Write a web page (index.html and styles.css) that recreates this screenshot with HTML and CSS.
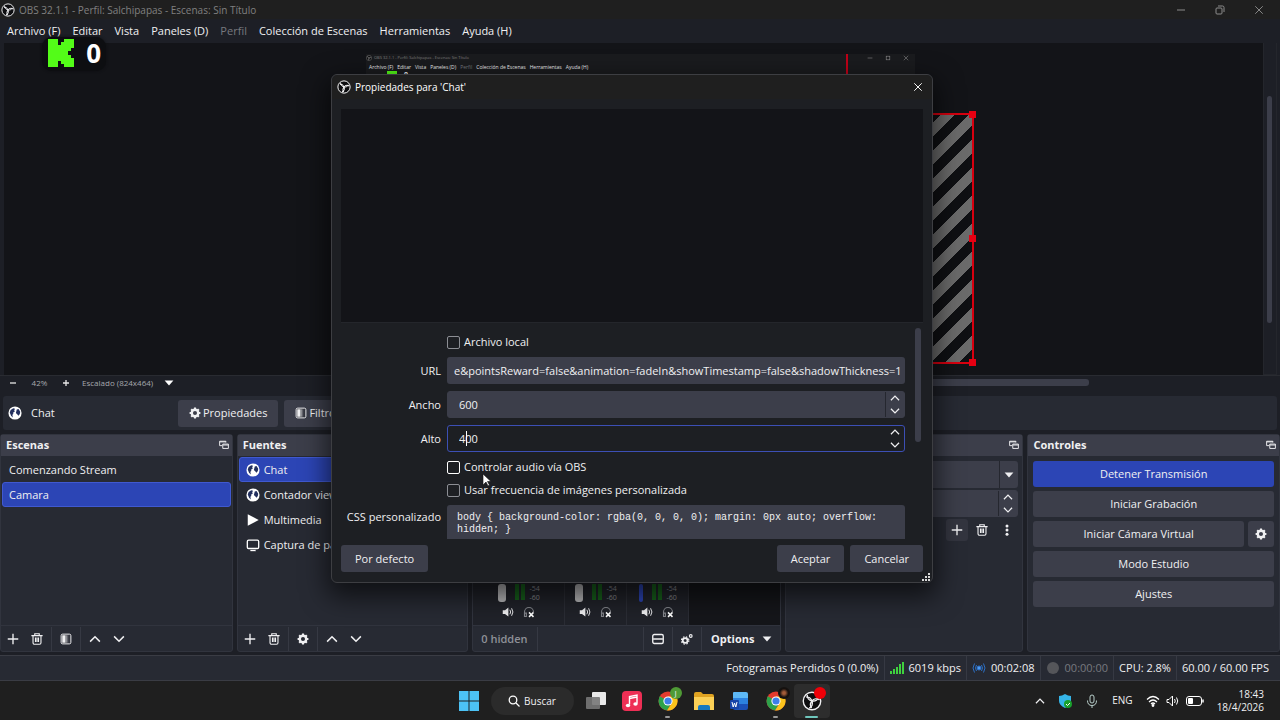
FILE: index.html
```html
<!DOCTYPE html>
<html lang="es">
<head>
  <meta charset="UTF-8" />
  <meta name="viewport" content="width=device-width, initial-scale=1.0"/>
  <title>OBS 32.1.1 - Perfil: Salchipapas - Escenas: Sin Título</title>
  <link rel="stylesheet" href="styles.css">
</head>
<body>

  <!-- shared icons -->
  <svg class="sprite" aria-hidden="true">
    <symbol id="obs" viewBox="0 0 16 16"><circle cx="8" cy="8" r="7" fill="#0d0d0f" stroke="currentColor" stroke-width="1.1"/><g fill="none" stroke="currentColor" stroke-width="1.1"><path id="blade" d="M4.200 3.200C4 5.600 5.600 7.600 8 8c2.300.3 4.300-.700 5-2.500"/><use href="#blade" transform="rotate(120 8 8)"/><use href="#blade" transform="rotate(240 8 8)"/></g></symbol>
    <symbol id="globe" viewBox="0 0 16 16"><circle cx="8" cy="8" r="7.500" fill="#fff"/><path d="M3 4.500 6 2.500l2 .5-1 2 1 1-2 1.500L6 9l-1 1 .5 3L3.500 11 2 7.500zM10 4l2-.5 2 3-.5 2.500-1.500 2-1.500-1.500L9 8l.5-2z" fill="#23305f"/></symbol>
    <symbol id="gear" viewBox="0 0 16 16"><circle cx="8" cy="8" r="4.300" fill="none" stroke="currentColor" stroke-width="3.200"/><path d="M8 .8v2.500M8 12.700v2.500M.8 8h2.500M12.700 8h2.500M2.900 2.900l1.800 1.800M11.300 11.300l1.800 1.800M2.900 13.100l1.800-1.800M11.300 4.700l1.800-1.800" stroke="currentColor" stroke-width="2.800"/></symbol>
    <symbol id="filter" viewBox="0 0 16 16"><rect x="1.500" y="1.500" width="13" height="13" rx="2" fill="#34363f" stroke="currentColor" stroke-width="1.300"/><path d="M3 3h4v10H3z" fill="currentColor"/><path d="M7 3h2v10H7z" fill="currentColor" opacity=".6"/><path d="M9 3h2v10H9z" fill="currentColor" opacity=".25"/></symbol>
    <symbol id="plus" viewBox="0 0 16 16"><path d="M8 1v14M1 8h14" stroke="currentColor" stroke-width="1.800"/></symbol>
    <symbol id="trash" viewBox="0 0 16 16"><path d="M.5 3.500h15M5 3V1h6V3M2.700 4v9a2 2 0 0 0 2 2h6.600a2 2 0 0 0 2-2V4M6 6v6M8 6v6M10 6v6" fill="none" stroke="currentColor" stroke-width="1.500"/></symbol>
    <symbol id="up" viewBox="0 0 16 16"><path d="M1.500 11.500 8 5l6.500 6.500" fill="none" stroke="currentColor" stroke-width="2"/></symbol>
    <symbol id="down" viewBox="0 0 16 16"><path d="M1.500 4.500 8 11l6.500-6.500" fill="none" stroke="currentColor" stroke-width="2"/></symbol>
    <symbol id="caret" viewBox="0 0 16 16"><path d="M1 4h14l-7 8z" fill="currentColor"/></symbol>
    <symbol id="float" viewBox="0 0 16 16"><path d="M11 4V2H1v7h4M1 3h10" fill="none" stroke="currentColor" stroke-width="1.500"/><path d="M6 6.500h9v7H6zM6 8h9" fill="none" stroke="currentColor" stroke-width="1.500"/></symbol>
    <symbol id="play" viewBox="0 0 16 16"><path d="M2 1.500v13L14.500 8z" fill="#fff"/></symbol>
    <symbol id="screen" viewBox="0 0 16 16"><rect x="1.500" y="2.500" width="13" height="9.500" rx="1.500" fill="none" stroke="#fff" stroke-width="1.500"/><path d="M5 14.300h6" stroke="#fff" stroke-width="1.500"/></symbol>
    <symbol id="dots" viewBox="0 0 16 16"><g fill="currentColor"><circle cx="8" cy="2.500" r="2"/><circle cx="8" cy="8" r="2"/><circle cx="8" cy="13.500" r="2"/></g></symbol>
    <symbol id="close" viewBox="0 0 16 16"><path d="M2 2l12 12M14 2 2 14" stroke="currentColor" stroke-width="1.500"/></symbol>
    <symbol id="sound" viewBox="0 0 16 16"><path d="M1 5.500h3L8.500 2v12L4 10.500H1z" fill="currentColor"/><path d="M10.500 5q2 3 0 6M12.800 3q3.500 5 0 10" fill="none" stroke="currentColor" stroke-width="1.300"/></symbol>
    <symbol id="phones" viewBox="0 0 16 16"><path d="M3 14H2V8a6 6 0 0 1 12 0M2.500 9.500h2V14h-2" fill="none" stroke="#85878d" stroke-width="1.500"/><path d="M8 8.500l6 6M14 8.500l-6 6" stroke="#fff" stroke-width="2"/></symbol>
    <symbol id="chrome" viewBox="0 0 20 20"><circle cx="10" cy="10" r="9.500" fill="#e33b2e"/><path d="M10 10 1.800 5.200A9.500 9.500 0 0 0 9 19.400l4.500-7.400z" fill="#2da24a"/><path d="M10 10l3.800 2.200L9 19.400A9.500 9.500 0 0 0 18.400 5.500H10z" fill="#fbc31c"/><circle cx="10" cy="10" r="4.600" fill="#fff"/><circle cx="10" cy="10" r="3.600" fill="#3d7fe8"/></symbol>
  </svg>

  <header class="titlebar">
    <svg class="icon-lg"><use href="#obs"/></svg>
    <span class="window-title">OBS 32.1.1 - Perfil: Salchipapas - Escenas: Sin Título</span>
    <button class="win-btn" aria-label="Minimizar"><svg class="icon-xs" viewBox="0 0 10 10"><path d="M1 5h8" stroke="currentColor"/></svg></button>
    <button class="win-btn" aria-label="Restaurar"><svg class="icon-xs" viewBox="0 0 10 10" fill="none" stroke="currentColor"><rect x="1" y="3" width="6" height="6" rx="1"/><path d="M3 1h4.500Q9 1 9 2.500V7"/></svg></button>
    <button class="win-btn" aria-label="Cerrar"><svg class="icon-xs"><use href="#close"/></svg></button>
  </header>

  <nav class="menubar">
    <a href="#">Archivo (F)</a>
    <a href="#">Editar</a>
    <a href="#">Vista</a>
    <a href="#">Paneles (D)</a>
    <a href="#" class="disabled">Perfil</a>
    <a href="#">Colección de Escenas</a>
    <a href="#">Herramientas</a>
    <a href="#">Ayuda (H)</a>
  </nav>

  <!-- kick viewer counter, floats over the window -->
  <div class="viewers">
    <svg class="kick" viewBox="0 0 26 28" fill="#53fc18"><path d="M0 0h10v6h3V3h3V0h10v9h-3v3h-3v4h3v3h3v9H16v-3h-3v-3h-3v6H0z"/></svg>
    <span>0</span>
  </div>

  <main class="preview">
    <div class="canvas">
      <div class="nested">
        <div class="nested-title">
          <svg class="nested-icon"><use href="#obs"/></svg>
          <span class="window-title">OBS 32.1.1 - Perfil: Salchipapas - Escenas: Sin Título</span>
          <svg class="nested-icon" viewBox="0 0 10 10"><path d="M1 5h8" stroke="currentColor"/></svg>
          <svg class="nested-icon" viewBox="0 0 10 10"><rect x="2" y="2" width="6" height="6" fill="none" stroke="currentColor"/></svg>
          <svg class="nested-icon"><use href="#close"/></svg>
        </div>
        <div class="nested-menu">
          <span>Archivo (F)</span><span>Editar</span><span>Vista</span><span>Paneles (D)</span><span class="disabled">Perfil</span><span>Colección de Escenas</span><span>Herramientas</span><span>Ayuda (H)</span>
        </div>
        <div class="nested-viewers"><i></i><b>0</b></div>
        <div class="nested-line"></div>
      </div>
      <div class="selection">
        <i class="handle top"></i>
        <i class="handle middle"></i>
        <i class="handle bottom"></i>
      </div>
    </div>
    <div class="vscroll"><div class="vthumb"></div></div>
  </main>

  <div class="zoombar">
    <button aria-label="Reducir"><svg class="icon-xs" viewBox="0 0 10 10"><path d="M2 5h6" stroke="currentColor" stroke-width="1.300"/></svg></button>
    <span class="zoom">42%</span>
    <button aria-label="Ampliar"><svg class="icon-xs" viewBox="0 0 10 10"><path d="M2 5h6M5 2v6" stroke="currentColor" stroke-width="1.300"/></svg></button>
    <button class="scale">Escalado (824x464) <svg class="icon-xs"><use href="#caret"/></svg></button>
    <div class="hscroll"><div class="hthumb"></div></div>
  </div>

  <section class="contextbar">
    <svg class="icon-lg"><use href="#globe"/></svg>
    <span class="context-name">Chat</span>
    <button class="btn"><svg class="icon"><use href="#gear"/></svg>Propiedades</button>
    <button class="btn"><svg class="icon"><use href="#filter"/></svg>Filtros</button>
  </section>

  <section class="docks">
    <div class="dock">
      <h2>Escenas <svg class="icon-xs"><use href="#float"/></svg></h2>
      <ul class="list">
        <li>Comenzando Stream</li>
        <li class="selected">Camara</li>
      </ul>
      <div class="toolbar">
        <button aria-label="Añadir escena"><svg class="icon"><use href="#plus"/></svg></button>
        <button aria-label="Eliminar escena"><svg class="icon"><use href="#trash"/></svg></button>
        <span class="sep"></span>
        <button aria-label="Filtros de escena"><svg class="icon"><use href="#filter"/></svg></button>
        <span class="sep"></span>
        <button aria-label="Subir escena"><svg class="icon"><use href="#up"/></svg></button>
        <button aria-label="Bajar escena"><svg class="icon"><use href="#down"/></svg></button>
      </div>
    </div>

    <div class="dock">
      <h2>Fuentes</h2>
      <ul class="list sources">
        <li class="selected"><svg class="icon-lg"><use href="#globe"/></svg>Chat</li>
        <li><svg class="icon-lg"><use href="#globe"/></svg>Contador viewers</li>
        <li><svg class="icon-lg"><use href="#play"/></svg>Multimedia</li>
        <li><svg class="icon-lg"><use href="#screen"/></svg>Captura de pantalla</li>
      </ul>
      <div class="toolbar">
        <button aria-label="Añadir fuente"><svg class="icon"><use href="#plus"/></svg></button>
        <button aria-label="Eliminar fuente"><svg class="icon"><use href="#trash"/></svg></button>
        <span class="sep"></span>
        <button aria-label="Propiedades de fuente"><svg class="icon"><use href="#gear"/></svg></button>
        <span class="sep"></span>
        <button aria-label="Subir fuente"><svg class="icon"><use href="#up"/></svg></button>
        <button aria-label="Bajar fuente"><svg class="icon"><use href="#down"/></svg></button>
      </div>
    </div>

    <div class="dock">
      <h2></h2>
      <div class="mixer">
        <div class="strip wide">
          <div class="levels"><i class="fader"></i><i class="meter"></i><span>-54<br>-60</span></div>
          <div class="strip-buttons">
            <button aria-label="Silenciar"><svg class="icon"><use href="#sound"/></svg></button>
            <button aria-label="Monitorizar"><svg class="icon"><use href="#phones"/></svg></button>
          </div>
        </div>
        <div class="strip">
          <div class="levels"><i class="fader"></i><i class="meter"></i><span>-54<br>-60</span></div>
          <div class="strip-buttons">
            <button aria-label="Silenciar"><svg class="icon"><use href="#sound"/></svg></button>
            <button aria-label="Monitorizar"><svg class="icon"><use href="#phones"/></svg></button>
          </div>
        </div>
        <div class="strip">
          <div class="levels"><i class="fader blue"></i><i class="meter"></i><span>-54<br>-60</span></div>
          <div class="strip-buttons">
            <button aria-label="Silenciar"><svg class="icon"><use href="#sound"/></svg></button>
            <button aria-label="Monitorizar"><svg class="icon"><use href="#phones"/></svg></button>
          </div>
        </div>
      </div>
      <div class="toolbar">
        <span class="hidden-count">0 hidden</span>
        <span class="sep"></span>
        <span class="spacer"></span>
        <span class="sep"></span>
        <button aria-label="Disposición"><svg class="icon" viewBox="0 0 16 16"><rect x="1" y="2" width="14" height="12" rx="2" fill="none" stroke="currentColor" stroke-width="1.800"/><path d="M1.500 8h13" stroke="currentColor" stroke-width="2"/></svg></button>
        <span class="sep"></span>
        <button aria-label="Propiedades avanzadas de audio"><svg class="icon" viewBox="0 0 16 16" fill="none" stroke="currentColor"><circle cx="5.500" cy="10" r="3.200" stroke-width="2.400"/><circle cx="5.500" cy="10" r="5" stroke-width="1.500" stroke-dasharray="2 2"/><circle cx="13" cy="4" r="1.800" stroke-width="1.500"/></svg></button>
        <span class="sep"></span>
        <button class="options">Options <svg class="icon-xs"><use href="#caret"/></svg></button>
      </div>
    </div>

    <div class="dock">
      <h2><svg class="icon-xs"><use href="#float"/></svg></h2>
      <div class="transitions">
        <div class="select-box">
          <select aria-label="Transición"></select>
          <svg class="icon-xs"><use href="#caret"/></svg>
        </div>
        <div class="spin">
          <input type="text" aria-label="Duración">
          <div class="arrows">
            <button aria-label="Aumentar duración"><svg class="icon-xs"><use href="#up"/></svg></button>
            <button aria-label="Reducir duración"><svg class="icon-xs"><use href="#down"/></svg></button>
          </div>
        </div>
        <div class="transition-buttons">
          <button class="filled" aria-label="Añadir transición"><svg class="icon"><use href="#plus"/></svg></button>
          <button aria-label="Eliminar transición"><svg class="icon"><use href="#trash"/></svg></button>
          <button aria-label="Más"><svg class="icon"><use href="#dots"/></svg></button>
        </div>
      </div>
    </div>

    <div class="dock">
      <h2>Controles <svg class="icon-xs"><use href="#float"/></svg></h2>
      <div class="controls">
        <button class="btn primary">Detener Transmisión</button>
        <button class="btn">Iniciar Grabación</button>
        <div class="row">
          <button class="btn">Iniciar Cámara Virtual</button>
          <button class="btn square" aria-label="Configurar cámara virtual"><svg class="icon"><use href="#gear"/></svg></button>
        </div>
        <button class="btn">Modo Estudio</button>
        <button class="btn">Ajustes</button>
      </div>
    </div>
  </section>

  <footer class="statusbar">
    <span>Fotogramas Perdidos 0 (0.0%)</span>
    <span><svg class="icon-lg" viewBox="0 0 14 14" fill="#3fd13f"><path d="M0 10h2v3H0zM3 8h2v5H3zM6 6h2v7H6zM9 3h2v10H9zM12 1h2v12h-2z"/></svg>6019 kbps</span>
    <span><svg class="icon-lg" viewBox="0 0 14 14" fill="none" stroke="#2c6fc4"><circle cx="7" cy="7" r="2" fill="#4b9bf5"/><path d="M4.500 4q-2 3 0 6M9.500 4q2 3 0 6M2.500 2.500q-3 4.500 0 9M11.500 2.500q3 4.500 0 9"/></svg>00:02:08</span>
    <span class="muted"><svg class="icon-lg" viewBox="0 0 14 14"><circle cx="7" cy="7" r="6" fill="#55565a"/></svg>00:00:00</span>
    <span>CPU: 2.8%</span>
    <span>60.00 / 60.00 FPS</span>
  </footer>

  <div class="taskbar">
    <div class="apps">
      <button class="app" aria-label="Inicio"><svg viewBox="0 0 20 20" fill="#4cc2f5"><path d="M0 0h9.500v9.500H0zM10.500 0H20v9.500h-9.500zM0 10.500h9.500V20H0zM10.500 10.500H20V20h-9.500z"/></svg></button>
      <button class="search"><svg class="icon" viewBox="0 0 12 12" fill="none" stroke="#fff" stroke-width="1.300"><circle cx="5" cy="5" r="3.800"/><path d="M8 8l3.500 3.500"/></svg>Buscar</button>
      <button class="app" aria-label="Vista de tareas"><svg viewBox="0 0 20 20"><rect x="6" y="1" width="14" height="13" rx="1" fill="#e9e9e9"/><rect x="0" y="6" width="14" height="12" rx="1" fill="#777" opacity=".9"/></svg></button>
      <button class="app" aria-label="Música"><svg viewBox="0 0 20 20"><rect width="20" height="20" rx="4" fill="#ee2f55"/><path d="M7.500 13.500V5.500L15 4v8.500M7.500 7.500 15 6" fill="none" stroke="#fff" stroke-width="1.400"/><ellipse cx="6" cy="14.500" rx="2.200" ry="1.800" fill="#fff"/><ellipse cx="13.500" cy="13" rx="2.200" ry="1.800" fill="#fff"/></svg></button>
      <button class="app running" aria-label="Chrome"><svg><use href="#chrome"/></svg><span class="badge green">J</span></button>
      <button class="app" aria-label="Explorador"><svg viewBox="0 0 20 20"><path d="M0 3q0-2 2-2h5l2 2h9q2 0 2 2v4H0z" fill="#e0a321"/><path d="M0 6h20v13H0z" fill="#fbd056"/><path d="M4 19v-3q0-2 2-2h8q2 0 2 2v3z" fill="#1779c0"/></svg></button>
      <button class="app" aria-label="Word"><svg viewBox="0 0 20 20"><path d="M3 2q0-1 1-1h12q2 0 2 2v4H3z" fill="#5db8f5"/><path d="M3 7h15v6H3z" fill="#2c82e0"/><path d="M3 13h15v4q0 2-2 2H5q-2 0-2-2z" fill="#1b50b8"/><rect y="9" width="9" height="9" rx="1" fill="#1844a8"/><path d="M2 11l1.200 5 1.300-4 1.300 4L7 11" fill="none" stroke="#fff"/></svg></button>
      <button class="app running" aria-label="Chrome, segundo perfil"><svg><use href="#chrome"/></svg><span class="badge dark"></span></button>
      <button class="app active" aria-label="OBS Studio"><svg><use href="#obs"/></svg><span class="badge red"></span></button>
    </div>
    <div class="tray">
      <svg class="icon-xs"><use href="#up"/></svg>
      <svg class="icon-lg" viewBox="0 0 14 14"><path d="M7 0q3 2 6 2v5q0 4-6 7-6-3-6-7V2q3 0 6-2z" fill="#35b5e8"/><circle cx="10" cy="10" r="4" fill="#19a02c"/><path d="M8 10l1.500 1.500L12 9" fill="none" stroke="#fff"/></svg>
      <svg class="icon-lg" viewBox="0 0 14 14" fill="none" stroke="#b9cfcb"><rect x="5" y="1" width="4" height="8" rx="2"/><path d="M2.500 6.500q0 5 4.500 5t4.500-5M7 11.500V14"/></svg>
      <span class="lang">ENG</span>
      <div class="system">
        <svg class="icon-lg" viewBox="0 0 14 14" fill="none" stroke="#fff" stroke-width="1.200"><path d="M1 5.500q6-6 12 0M3 8q4-4 8 0M5 10q2-2 4 0"/><circle cx="7" cy="11.500" r=".8" fill="#fff"/></svg>
        <svg class="icon-lg" viewBox="0 0 14 14" fill="none" stroke="#fff"><path d="M1 5.500h2L6.500 2v10L3 8.500H1zM8.500 5q1.500 2 0 4M10.500 3.500q2.500 3.500 0 7"/></svg>
        <svg class="battery" viewBox="0 0 18 10"><rect x=".5" y=".5" width="15" height="9" rx="2.500" fill="none" stroke="#fff"/><rect x="2" y="2" width="5" height="6" rx="1" fill="#fff"/><path d="M17 3.500v3" stroke="#fff" stroke-width="1.500"/></svg>
      </div>
      <div class="clock">18:43<br>18/4/2026</div>
    </div>
  </div>

  <div class="dialog" role="dialog" aria-labelledby="dialogTitle">
    <div class="dialog-title">
      <svg class="icon-lg"><use href="#obs"/></svg>
      <span id="dialogTitle">Propiedades para 'Chat'</span>
      <button aria-label="Cerrar"><svg class="icon-xs"><use href="#close"/></svg></button>
    </div>
    <div class="dialog-preview"></div>
    <div class="form-area">
      <form class="form">
        <div class="check">
          <input type="checkbox" id="local"><label for="local">Archivo local</label>
        </div>

        <label for="url">URL</label>
        <input type="text" id="url" class="field" value="e&amp;pointsReward=false&amp;animation=fadeIn&amp;showTimestamp=false&amp;shadowThickness=1">

        <label for="width">Ancho</label>
        <div class="spin">
          <input type="text" id="width" value="600">
          <div class="arrows">
            <button type="button" aria-label="Aumentar ancho"><svg class="icon-xs"><use href="#up"/></svg></button>
            <button type="button" aria-label="Reducir ancho"><svg class="icon-xs"><use href="#down"/></svg></button>
          </div>
        </div>

        <label for="height">Alto</label>
        <div class="spin focused">
          <input type="text" id="height" value="400">
          <i class="text-cursor"></i>
          <div class="arrows">
            <button type="button" aria-label="Aumentar alto"><svg class="icon-xs"><use href="#up"/></svg></button>
            <button type="button" aria-label="Reducir alto"><svg class="icon-xs"><use href="#down"/></svg></button>
          </div>
        </div>

        <div class="check hover">
          <input type="checkbox" id="audio"><label for="audio">Controlar audio vía OBS</label>
        </div>
        <div class="check">
          <input type="checkbox" id="fps"><label for="fps">Usar frecuencia de imágenes personalizada</label>
        </div>

        <label for="css" class="top">CSS personalizado</label>
        <textarea id="css" class="field" rows="4">body { background-color: rgba(0, 0, 0, 0); margin: 0px auto; overflow: hidden; }</textarea>
      </form>
      <div class="form-scroll"><div class="form-thumb"></div></div>
    </div>
    <div class="dialog-buttons">
      <button class="btn">Por defecto</button>
      <span class="spacer"></span>
      <button class="btn">Aceptar</button>
      <button class="btn">Cancelar</button>
    </div>
    <svg class="grip" viewBox="0 0 8 8" fill="#d8d8d8"><path d="M0 6h2v2H0zM3 3h2v2H3zM3 6h2v2H3zM6 0h2v2H6zM6 3h2v2H6zM6 6h2v2H6z"/></svg>
  </div>

  <svg class="pointer" viewBox="0 0 10 14"><path d="M1 1v11l3-3 2 4 1.500-1-2-3.500H9z" fill="#fff" stroke="#111" stroke-width=".6"/></svg>

</body>
</html>
```

FILE: styles.css
```css
* {
  box-sizing: border-box;
}

body {
  margin: 0;
  min-height: 100vh;
  display: flex;
  flex-direction: column;
  position: relative;
  overflow: hidden;
  background-color: #1d1f26;
  color: #f0f0f2;
  font-family: "Open Sans", "Noto Sans", sans-serif;
  font-size: 11px;
  line-height: 16px;
}

button, input, select, textarea {
  font: inherit;
  color: inherit;
  margin: 0;
  padding: 0;
  border: none;
  background: none;
  outline: none;
}

button {
  display: inline-flex;
  align-items: center;
  justify-content: center;
  white-space: nowrap;
}

a {
  color: inherit;
  text-decoration: none;
}

svg {
  display: block;
  flex: none;
}

.sprite {
  position: absolute;
  width: 0;
  height: 0;
}

.icon-xs { width: 10px; height: 10px; }
.icon { width: 12px; height: 12px; }
.icon-lg { width: 14px; height: 14px; }

.spacer {
  flex: 1;
}

/* title and menu */
.titlebar {
  display: flex;
  align-items: center;
  height: 19px;
  padding: 0 4px 0 1px;
  gap: 4px;
  background-color: #1f1f1f;
  font-size: 10px;
}

.window-title {
  flex: 1;
  color: #808080;
}

.win-btn {
  width: 35px;
  color: #8c8c8c;
}

.menubar {
  display: flex;
  align-items: center;
  gap: 12px;
  height: 24px;
  padding: 0 7px;
}

.disabled, .muted {
  color: #77797f;
}

.viewers {
  position: absolute;
  z-index: 1;
  top: 37px;
  left: 42px;
  width: 64px;
  height: 34px;
  display: flex;
  align-items: center;
  justify-content: space-between;
  padding: 0 5px 2px 6px;
  border-radius: 10px;
  background-color: #0d0e11;
  box-shadow: 0 0 3px #0d0e11;
  color: #fff;
  font-size: 26px;
  font-weight: bold;
}

.kick {
  width: 26px;
  height: 28px;
}

/* preview */
.preview {
  flex: 1;
  display: flex;
  padding: 0 3px 0 4px;
}

.canvas {
  flex: 1;
  position: relative;
  overflow: hidden;
  background-color: #131418;
}

.nested {
  position: absolute;
  top: 11px;
  left: 362px;
  width: 549px;
  height: 300px;
  background-color: #1a1b1e;
  font-size: 5px;
  line-height: 8px;
}

.nested-title {
  display: flex;
  align-items: center;
  gap: 2px;
  padding-right: 6px;
  font-size: 4px;
  color: #8c8c8c;
}

.nested-title svg + svg {
  margin-left: 10px;
}

.nested-icon {
  width: 6px;
  height: 6px;
}

.nested-menu {
  display: flex;
  gap: 4px;
  padding: 1px 3px 0;
}

.nested-viewers {
  display: flex;
  gap: 7px;
  padding-left: 21px;
  font-size: 7px;
  line-height: 8px;
}

.nested-viewers i {
  width: 10px;
  height: 10px;
  background-color: #53fc18;
}

.nested-line {
  position: absolute;
  top: 0;
  left: 480px;
  width: 2px;
  height: 30px;
  background-color: #c00018;
}

.selection {
  position: absolute;
  top: 70px;
  left: 843px;
  width: 127px;
  height: 251px;
  border: 2px solid #d8000f;
  background: linear-gradient(135deg, #0f1013 25%, #6b6b6b 25% 50%, #0f1013 50% 75%, #6b6b6b 75%) -7px 0 / 28px 28px;
}

.handle {
  position: absolute;
  right: -4px;
  width: 7px;
  height: 7px;
  background-color: #e60012;
}

.handle.top { top: -4px; }
.handle.middle { top: calc(50% - 4px); }
.handle.bottom { bottom: -4px; }

.vscroll {
  width: 14px;
  padding: 53px 4px 0 3px;
  border: 1px solid #24262c;
  border-top: none;
}

.vthumb {
  height: 227px;
  border-radius: 3px;
  background-color: #3c3e4a;
}

.zoombar {
  display: flex;
  align-items: center;
  height: 16px;
  padding: 0 18px 2px 8px;
  border-top: 1px solid #292b31;
  font-size: 8px;
  line-height: 12px;
  color: #a6a8ad;
}

.zoombar button {
  color: #e6e6e6;
}

.zoombar .zoom {
  width: 43px;
  text-align: center;
}

.zoombar .scale {
  margin-left: 11px;
  gap: 11px;
  color: #a6a8ad;
}

.zoombar .scale svg {
  color: #fff;
}

.hscroll {
  flex: 1;
  margin-left: 4px;
}

.hthumb {
  width: 55%;
  height: 7px;
  margin-left: 29%;
  border-radius: 3px;
  background-color: #3c3e4a;
}

.contextbar {
  display: flex;
  align-items: center;
  gap: 6px;
  height: 34px;
  margin: 5px 3px 4px;
  padding: 0 5px;
  border-radius: 3px;
  background-color: #272a33;
}

.context-name {
  width: 144px;
  padding-left: 3px;
}

.btn {
  height: 27px;
  padding: 0 14px;
  gap: 2px;
  border-radius: 3px;
  background-color: #3c3e4a;
}

.contextbar .btn {
  padding: 0 11px;
}

/* docks */
.docks {
  display: grid;
  grid-template-columns: 233fr 232fr 309fr 239fr 253fr;
  gap: 4px;
  min-height: 218px;
}

.dock {
  display: flex;
  flex-direction: column;
  min-width: 0;
  border: 1px solid #31343e;
  border-radius: 3px;
  background-color: #272a33;
}

.dock h2 {
  display: flex;
  align-items: center;
  justify-content: space-between;
  height: 21px;
  margin: 0;
  padding: 0 3px 2px 5px;
  background-color: #3c3e4a;
  font-size: 11px;
}

.dock h2 svg:only-child {
  margin-left: auto;
}

.list {
  flex: 1;
  margin: 0;
  padding: 1px;
  list-style: none;
}

.list li {
  display: flex;
  align-items: center;
  gap: 4px;
  height: 25px;
  padding: 0 6px;
  border: 1px solid transparent;
  border-radius: 3px;
  white-space: nowrap;
}

.list .selected {
  border-color: #4059d0;
  background-color: #2c45b5;
}

.toolbar {
  display: flex;
  align-items: center;
  height: 26px;
  padding: 0;
  border-top: 1px solid #31343e;
}

.toolbar button {
  width: 24px;
}

.sep {
  width: 1px;
  height: 24px;
  margin: 0 2px;
  background-color: #363943;
}

.toolbar .options {
  width: 76px;
  gap: 8px;
  font-weight: bold;
}

.hidden-count {
  width: 62px;
  padding-left: 8px;
  font-weight: 600;
  color: #8f9198;
}

.mixer {
  flex: 1;
  display: flex;
  background-color: #15161a;
}

.strip {
  width: 62px;
  display: flex;
  flex-direction: column;
  justify-content: flex-end;
  gap: 4px;
  padding-bottom: 7px;
  border-right: 1px solid #2b2d35;
  background-color: #202229;
}

.strip.wide {
  width: 92px;
}

.levels, .strip-buttons {
  display: flex;
  justify-content: center;
  gap: 9px;
}

.levels {
  font-size: 7px;
  line-height: 9px;
  color: #8c8e94;
}

.fader {
  width: 8px;
  height: 18px;
  border-radius: 3px;
  background-color: #b9b9bb;
}

.fader.blue {
  width: 4px;
  background-color: #2c45b5;
}

.meter {
  width: 10px;
  height: 16px;
  border: solid #17611c;
  border-width: 0 4px;
}

.levels span {
  margin-left: -4px;
}

.transitions {
  display: flex;
  flex-direction: column;
  gap: 2px;
  padding: 5px 4px;
}

.select-box {
  display: flex;
  align-items: center;
  height: 27px;
  padding-right: 4px;
  border-radius: 3px;
  background-color: #3c3e4a;
}

.select-box select {
  flex: 1;
  height: 100%;
  margin-right: 4px;
  appearance: none;
  border-right: 1px solid #25272f;
}

.transition-buttons {
  display: flex;
  justify-content: flex-end;
  gap: 3px;
}

.transition-buttons button {
  width: 22px;
  height: 22px;
  border-radius: 3px;
}

.transition-buttons .filled {
  background-color: #33353f;
}

.controls {
  display: flex;
  flex-direction: column;
  gap: 4px;
  padding: 5px;
}

.controls .btn {
  height: 26px;
}

.controls .row {
  display: flex;
  gap: 4px;
}

.row .btn {
  flex: 1;
}

.row .square {
  flex: none;
  width: 26px;
  padding: 0;
}

.btn.primary {
  background-color: #2c45b5;
}

/* status bar */
.statusbar {
  display: flex;
  justify-content: flex-end;
  height: 26px;
  margin-top: 3px;
  padding-right: 6px;
  border: solid #3a3c44;
  border-width: 1px 0;
  background-color: #272a33;
}

.statusbar span {
  display: flex;
  align-items: center;
  gap: 5px;
  padding: 0 5px;
  border-left: 1px solid #363943;
}

.statusbar span:first-child {
  border-left: none;
}

/* windows taskbar */
.taskbar {
  display: grid;
  grid-template-columns: 1fr auto 1fr;
  align-items: center;
  height: 39px;
  background-color: #1f1f1f;
}

.apps {
  grid-column: 2;
  display: flex;
  align-items: center;
}

.app {
  position: relative;
  width: 36px;
  height: 34px;
  border-radius: 4px;
}

.app svg {
  width: 20px;
  height: 20px;
}

.app.active {
  background-color: #2d2d2d;
}

.app.running::after, .app.active::after {
  content: "";
  position: absolute;
  bottom: 0;
  width: 5px;
  height: 2px;
  border-radius: 1px;
  background-color: #999;
}

.app.active::after {
  width: 13px;
  background-color: #6fc7bd;
}

.badge {
  position: absolute;
  top: 3px;
  right: 4px;
  width: 12px;
  height: 12px;
  border-radius: 50%;
  font-size: 8px;
  line-height: 12px;
}

.badge.green { background-color: #4f9a35; }
.badge.dark { background: radial-gradient(#a35c38 15%, #15110f 50%); }
.badge.red { background-color: #f00008; }

.search {
  width: 83px;
  height: 28px;
  margin: 0 4px;
  gap: 4px;
  border-radius: 14px;
  background-color: #2b2b2b;
  font-size: 10px;
}

.tray {
  display: flex;
  align-items: center;
  justify-content: flex-end;
  gap: 13px;
  padding-right: 16px;
  font-size: 10px;
  line-height: 13px;
}

.system {
  display: flex;
  align-items: center;
  gap: 6px;
}

.battery {
  width: 18px;
  height: 10px;
}

.clock {
  text-align: right;
}

/* properties window */
.dialog {
  position: absolute;
  top: 74px;
  left: 331px;
  width: 602px;
  height: 509px;
  display: flex;
  flex-direction: column;
  padding: 0 9px 10px;
  border: 1px solid #3d3e42;
  border-radius: 6px;
  background-color: #1d1f23;
  box-shadow: 0 10px 26px 4px rgba(0, 0, 0, 0.6);
}

.dialog-title {
  display: flex;
  align-items: center;
  gap: 4px;
  height: 24px;
  margin: 0 -9px 10px;
  padding: 0 9px 0 5px;
  border-radius: 6px 6px 0 0;
  background-color: #1f1f1f;
  font-size: 10px;
  color: #fff;
}

.dialog-title button {
  margin-left: auto;
}

.dialog-preview {
  flex: 1;
  background-color: #131418;
}

.form-area {
  display: flex;
  height: 217px;
  overflow: hidden;
  border-top: 1px solid #24262b;
}

.form {
  flex: 1;
  display: grid;
  grid-template-columns: 100px 1fr;
  align-content: start;
  align-items: center;
  gap: 7px 6px;
  padding: 11px 9px 0 0;
}

.form > label {
  text-align: right;
  white-space: nowrap;
}

.form > label.top {
  align-self: start;
  padding-top: 4px;
}

.field {
  width: 100%;
  height: 27px;
  padding: 0 1px 0 7px;
  border-radius: 3px;
  background-color: #3c3e4a;
}

textarea.field {
  height: 60px;
  padding: 7px 10px;
  resize: none;
  overflow: hidden;
  font-family: "Liberation Mono", monospace;
  font-size: 10px;
  line-height: 12px;
}

.spin {
  display: flex;
  position: relative;
  height: 27px;
  border: 1px solid #3c3e4a;
  border-radius: 3px;
  background-color: #3c3e4a;
}

.spin input {
  flex: 1;
  min-width: 0;
  padding-left: 11px;
}

.spin.focused {
  border-color: #3c4fb5;
  background-color: #1d1f23;
}

.focused .arrows {
  border-color: transparent;
}

.text-cursor {
  position: absolute;
  top: 5px;
  left: 18px;
  width: 1px;
  height: 15px;
  background-color: #fff;
}

.arrows {
  display: flex;
  flex-direction: column;
  justify-content: space-around;
  width: 19px;
  border-left: 1px solid #25272f;
}

.check {
  grid-column: 2;
  display: flex;
  align-items: center;
  gap: 4px;
  height: 16px;
}

.check input {
  width: 13px;
  height: 13px;
  appearance: none;
  border: 1px solid #8c8e94;
  border-radius: 2px;
}

.check.hover input {
  border-color: #fff;
}

.form-scroll {
  width: 9px;
  padding: 5px 2px 0 1px;
}

.form-thumb {
  height: 114px;
  border-radius: 3px;
  background-color: #3c3e4a;
}

.dialog-buttons {
  display: flex;
  gap: 6px;
  margin-top: 6px;
}

.grip {
  position: absolute;
  right: 2px;
  bottom: 1px;
  width: 8px;
  height: 8px;
}

.pointer {
  position: absolute;
  top: 473px;
  left: 482px;
  width: 10px;
  height: 14px;
}
```
